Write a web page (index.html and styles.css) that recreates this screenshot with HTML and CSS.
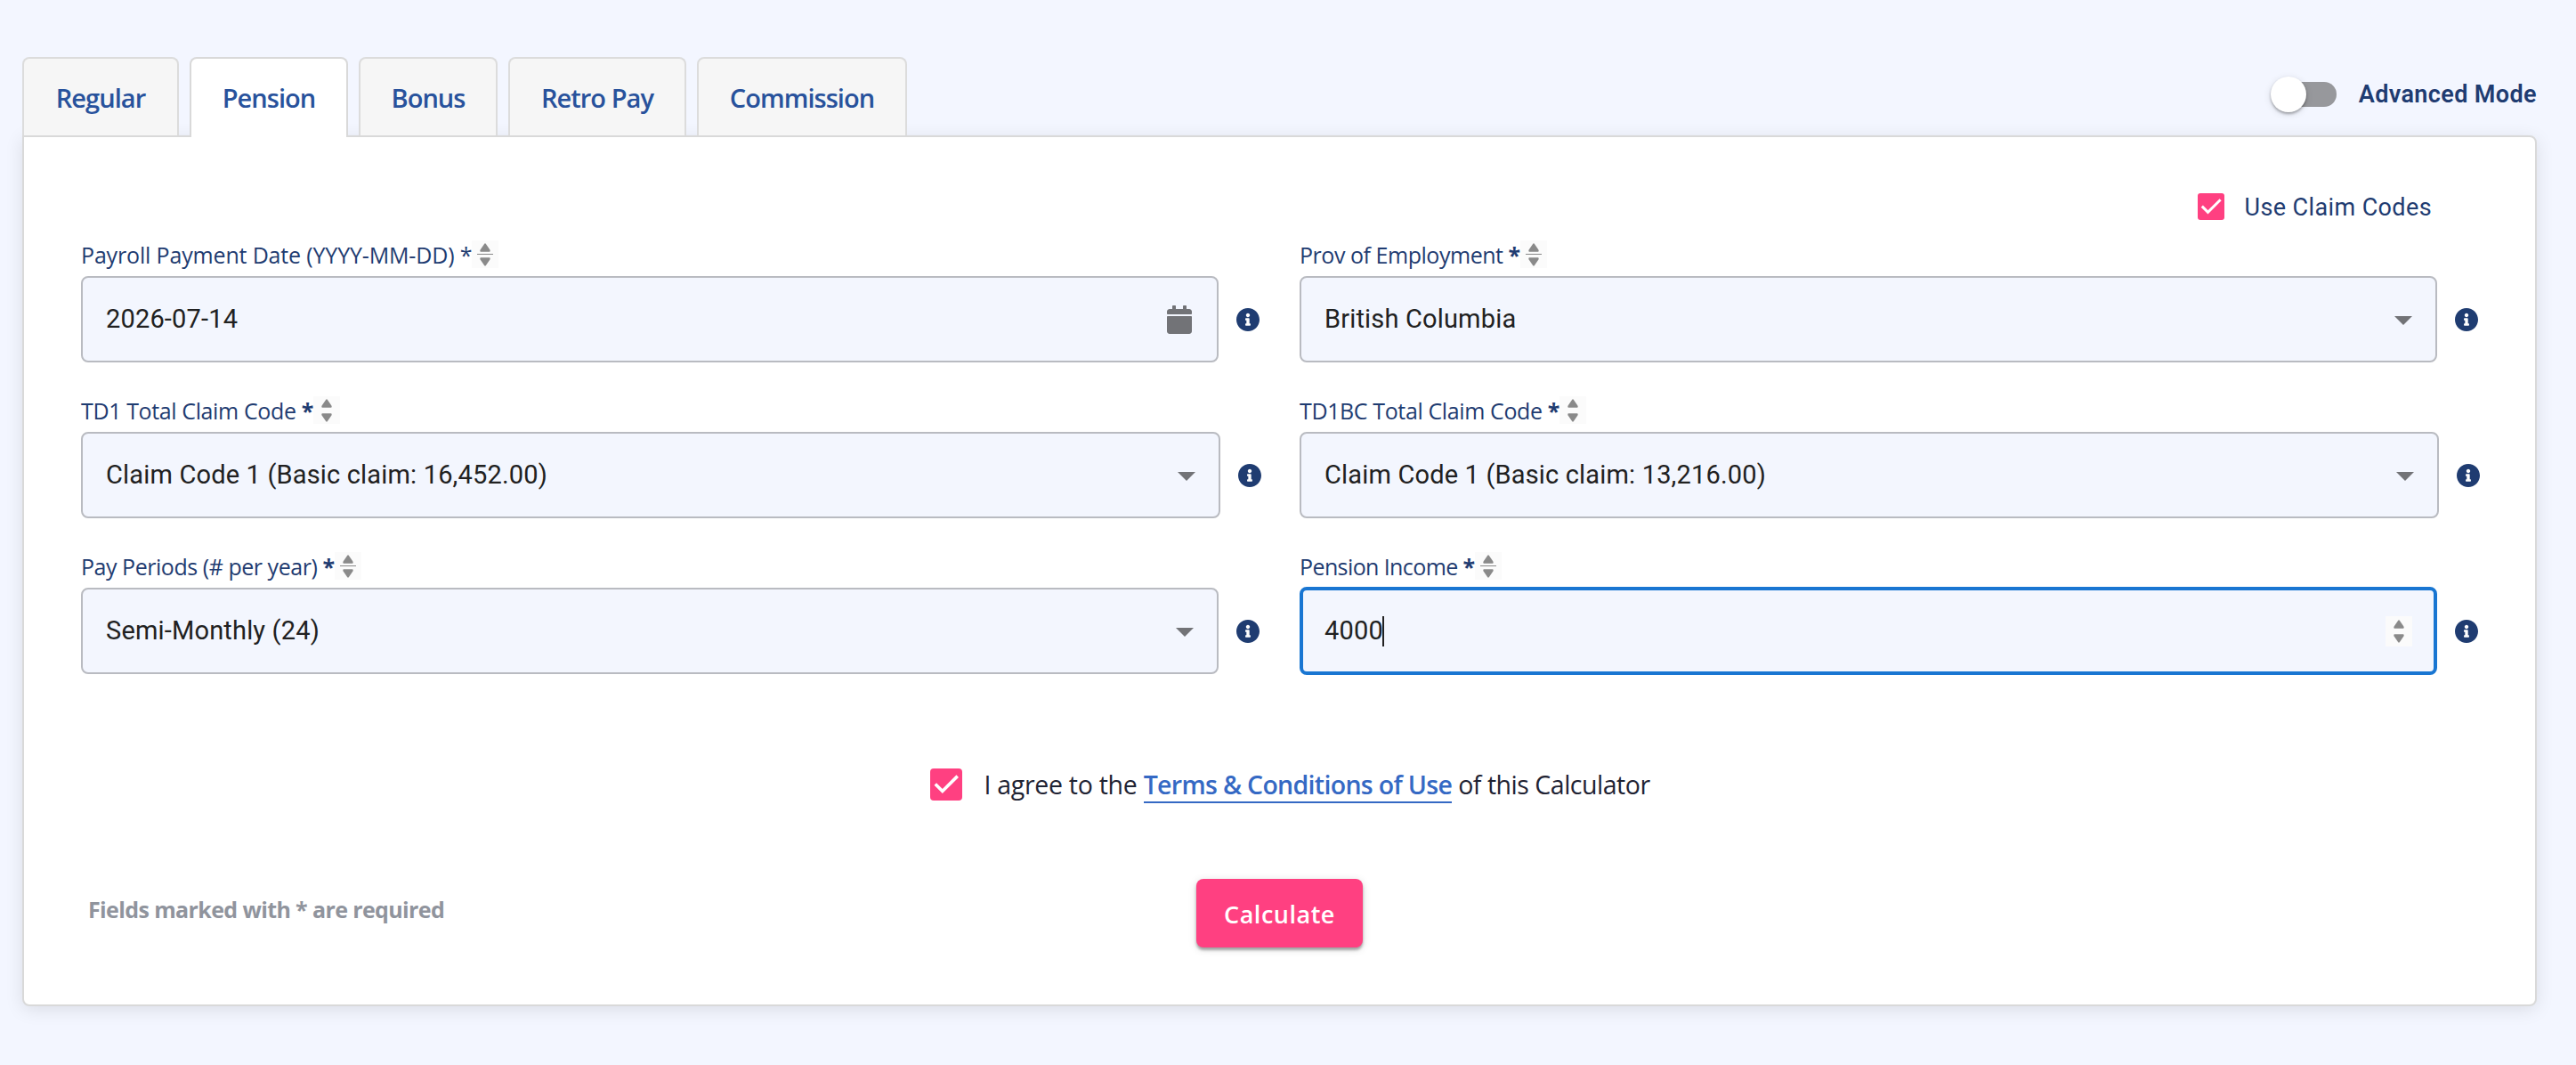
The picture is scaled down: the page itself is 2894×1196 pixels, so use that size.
FILE: index.html
```html
<!DOCTYPE html>
<html lang="en">
<head>
    <meta charset="UTF-8">
    <meta name="viewport" content="width=device-width, initial-scale=1.0">
    <title>Payroll Calculator</title>
    <link rel="stylesheet" href="styles.css">
</head>
<body>

<!-- Shared icons -->
<svg class="icon-defs" width="0" height="0">
    <symbol id="icon-info" viewBox="8 8 496 496">
        <path d="M256 8C119.043 8 8 119.083 8 256c0 136.997 111.043 248 248 248s248-111.003 248-248C504 119.083 392.957 8 256 8zm0 110c23.196 0 42 18.804 42 42s-18.804 42-42 42-42-18.804-42-42 18.804-42 42-42zm56 254c0 6.627-5.373 12-12 12h-88c-6.627 0-12-5.373-12-12v-24c0-6.627 5.373-12 12-12h12v-64h-12c-6.627 0-12-5.373-12-12v-24c0-6.627 5.373-12 12-12h64c6.627 0 12 5.373 12 12v100h12c6.627 0 12 5.373 12 12v24z"/>
    </symbol>
    <symbol id="icon-calendar" viewBox="0 0 448 512">
        <path d="M12 192h424c6.600 0 12 5.400 12 12v260c0 26.500-21.500 48-48 48H48c-26.500 0-48-21.500-48-48V204c0-6.600 5.400-12 12-12zm436-44v-36c0-26.500-21.500-48-48-48h-48V12c0-6.600-5.400-12-12-12h-40c-6.600 0-12 5.400-12 12v52H160V12c0-6.600-5.400-12-12-12h-40c-6.600 0-12 5.400-12 12v52H48C21.500 64 0 85.500 0 112v36c0 6.600 5.400 12 12 12h424c6.600 0 12-5.400 12-12z"/>
    </symbol>
    <symbol id="icon-arrow" viewBox="0 0 20 10">
        <path d="M0 0h20L10 10z"/>
    </symbol>
    <symbol id="icon-check" viewBox="0 0 30 30">
        <path d="M4.800 14.600l6.700 6.700L25.600 7.200" fill="none" stroke="#fff" stroke-width="3"/>
    </symbol>
    <symbol id="icon-spin" viewBox="0 0 12 27">
        <path d="M5.200 .700Q6-.300 6.800 .700L11.600 7.800Q12.400 10 11 10H1Q-.400 10 .400 7.800z"/>
        <path d="M5.200 26.300Q6 27.300 6.800 26.300L11.600 19.200Q12.400 17 11 17H1Q-.400 17 .400 19.200z"/>
    </symbol>
</svg>

<div class="calculator">
    <div class="top-bar">
        <div class="tabs">
            <div class="tab tab-regular">Regular</div>
            <div class="tab tab-pension active">Pension</div>
            <div class="tab tab-bonus">Bonus</div>
            <div class="tab tab-retro">Retro Pay</div>
            <div class="tab tab-commission">Commission</div>
        </div>
        <div class="mode">
            <div class="toggle"><div class="knob"></div></div>
            <span>Advanced Mode</span>
        </div>
    </div>

    <div class="card">
        <div class="claim-row">
            <svg class="checkbox"><use href="#icon-check"/></svg>
            <span>Use Claim Codes</span>
        </div>

        <div class="fields">
            <div class="field">
                <div class="label label-date"><span>Payroll Payment Date (YYYY-MM-DD) *</span><div class="stepper lined"><svg><use href="#icon-spin"/></svg></div></div>
                <div class="control">
                    <div class="input"><span>2026-07-14</span><svg class="calendar"><use href="#icon-calendar"/></svg></div>
                    <svg class="info"><use href="#icon-info"/></svg>
                </div>
            </div>
            <div class="field">
                <div class="label"><span>Prov of Employment <b>*</b></span><div class="stepper lined"><svg><use href="#icon-spin"/></svg></div></div>
                <div class="control">
                    <div class="input"><span>British Columbia</span><svg class="arrow"><use href="#icon-arrow"/></svg></div>
                    <svg class="info"><use href="#icon-info"/></svg>
                </div>
            </div>
            <div class="field">
                <div class="label label-claim"><span>TD1 Total Claim Code <b>*</b></span><div class="stepper"><svg><use href="#icon-spin"/></svg></div></div>
                <div class="control">
                    <div class="input wide"><span>Claim Code 1 (Basic claim: 16,452.00)</span><svg class="arrow"><use href="#icon-arrow"/></svg></div>
                    <svg class="info"><use href="#icon-info"/></svg>
                </div>
            </div>
            <div class="field">
                <div class="label label-claim"><span>TD1BC Total Claim Code <b>*</b></span><div class="stepper"><svg><use href="#icon-spin"/></svg></div></div>
                <div class="control">
                    <div class="input wide"><span>Claim Code 1 (Basic claim: 13,216.00)</span><svg class="arrow"><use href="#icon-arrow"/></svg></div>
                    <svg class="info"><use href="#icon-info"/></svg>
                </div>
            </div>
            <div class="field">
                <div class="label"><span>Pay Periods (# per year) <b>*</b></span><div class="stepper lined"><svg><use href="#icon-spin"/></svg></div></div>
                <div class="control">
                    <div class="input"><span>Semi-Monthly (24)</span><svg class="arrow"><use href="#icon-arrow"/></svg></div>
                    <svg class="info"><use href="#icon-info"/></svg>
                </div>
            </div>
            <div class="field">
                <div class="label label-income"><span>Pension Income <b>*</b></span><div class="stepper lined"><svg><use href="#icon-spin"/></svg></div></div>
                <div class="control">
                    <div class="input focused"><span>4000</span><div class="caret"></div><div class="stepper"><svg><use href="#icon-spin"/></svg></div></div>
                    <svg class="info"><use href="#icon-info"/></svg>
                </div>
            </div>
        </div>

        <div class="agree">
            <svg class="checkbox large"><use href="#icon-check"/></svg>
            <div><span class="agree-start">I agree to the </span><a class="terms">Terms &amp; Conditions of Use</a> of this Calculator</div>
        </div>

        <div class="footer">
            <div class="note">Fields marked with * are required</div>
            <button class="btn">Calculate</button>
        </div>
    </div>
</div>

</body>
</html>
```
FILE: styles.css
```css
* {
    box-sizing: border-box;
}

body {
    font-family: "Open Sans", "Noto Sans", sans-serif;
    margin: 0;
    background-color: #f3f6ff;
    color: #1f3c71;
}

svg {
    display: block;
    flex: none;
}

.icon-defs {
    position: absolute;
}

.calculator {
    padding: 64px 44px 66px 25px;
}

.top-bar {
    display: flex;
    justify-content: space-between;
    height: 88px;
}

.tabs {
    display: flex;
    gap: 12px;
}

.tab {
    display: flex;
    align-items: center;
    justify-content: center;
    height: 88px;
    border: 2px solid #dcdcdc;
    border-bottom: none;
    border-radius: 8px 8px 0 0;
    background-color: #f6f6f6;
    color: #28529c;
    font-size: 29px;
    font-weight: 600;
    letter-spacing: -0.95px;
}

.tab.active {
    position: relative;
    z-index: 1;
    height: 90px;
    padding-bottom: 2px;
    background-color: #fff;
    border-color: #d9d9d9;
}

.tab-regular {
    width: 176px;
}

.tab-pension {
    width: 178px;
}

.tab-bonus {
    width: 156px;
}

.tab-retro {
    width: 200px;
}

.tab-commission {
    width: 236px;
}

.mode {
    display: flex;
    align-items: center;
    gap: 25px;
    height: 84px;
    font-family: Roboto, sans-serif;
    font-size: 27px;
    font-weight: 600;
    letter-spacing: 0.38px;
}

.toggle {
    display: flex;
    align-items: center;
    width: 72px;
    height: 28px;
    border-radius: 14px;
    background-color: #97989c;
}

.knob {
    flex: none;
    width: 40px;
    height: 40px;
    margin-left: -2px;
    border-radius: 50%;
    background-color: #fff;
    box-shadow: 0 2px 3px rgba(0, 0, 0, 0.3), 0 2px 8px rgba(0, 0, 0, 0.12);
}

.card {
    padding: 63px 62px 64px 64px;
    border: 2px solid #d9d9d9;
    border-radius: 0 8px 8px 8px;
    background-color: #fff;
    box-shadow: 0 4px 20px rgba(0, 0, 0, 0.1);
}

.claim-row {
    display: flex;
    align-items: center;
    justify-content: flex-end;
    gap: 23px;
    height: 30px;
    padding-right: 54px;
    margin-bottom: 23px;
    font-family: Roboto, sans-serif;
    font-size: 27px;
    letter-spacing: 0.38px;
}

.claim-row span {
    padding-top: 2px;
}

.checkbox {
    width: 30px;
    height: 30px;
    border-radius: 3px;
    background-color: #ff4081;
}

.checkbox.large {
    width: 36px;
    height: 36px;
    border-radius: 4px;
}

/* Form fields */
.fields {
    display: grid;
    grid-template-columns: 1326px 1326px;
    column-gap: 43px;
    row-gap: 38px;
}

.label {
    display: flex;
    height: 31px;
    margin-bottom: 9px;
    font-size: 25px;
    line-height: 33px;
    letter-spacing: -0.46px;
    white-space: nowrap;
}

.label-date {
    letter-spacing: -0.16px;
}

.label-claim {
    letter-spacing: -0.38px;
}

.label-income {
    letter-spacing: -0.6px;
}

.stepper {
    display: flex;
    align-items: center;
    justify-content: center;
    width: 30px;
    height: 31px;
    background-color: #fbfbfb;
}

.stepper svg {
    width: 12px;
    height: 26px;
    fill: #8a8a8a;
}

.stepper.lined {
    background-image: linear-gradient(#8a8a8a, #8a8a8a);
    background-size: 18px 1px;
    background-position: center 15px;
    background-repeat: no-repeat;
}

.control {
    display: flex;
    align-items: center;
    gap: 20px;
    height: 97px;
}

.input {
    display: flex;
    align-items: center;
    justify-content: space-between;
    width: 1278px;
    height: 97px;
    padding: 0 26px;
    border: 2px solid #b9bbc1;
    border-radius: 8px;
    background-color: #f3f6fe;
    color: #212121;
    font-family: Roboto, sans-serif;
    font-size: 29px;
    letter-spacing: 0.17px;
}

.input span {
    padding-bottom: 1px;
}

.input.wide {
    width: 1280px;
}

.input.focused {
    height: 99px;
    padding: 0 24px;
    border: 4px solid #1976d2;
}

.input .stepper {
    height: 34px;
    margin-left: auto;
}

.caret {
    width: 2px;
    height: 34px;
    margin-left: -1px;
    background-color: #212121;
}

.arrow {
    width: 20px;
    height: 10px;
    margin-top: 2px;
    fill: #727377;
}

.calendar {
    width: 28px;
    height: 32px;
    margin-right: 2px;
    fill: #727377;
}

.info {
    width: 26px;
    height: 26px;
    fill: #1f3c71;
}

.agree {
    display: flex;
    align-items: center;
    justify-content: center;
    gap: 24px;
    height: 36px;
    margin-top: 106px;
    padding-left: 22px;
    color: #1f2333;
    font-size: 28.5px;
    letter-spacing: -0.48px;
}

.agree-start {
    letter-spacing: -0.28px;
}

.terms {
    border-bottom: 2px solid #3569c4;
    color: #3569c4;
    font-weight: 600;
    letter-spacing: -0.68px;
}

.footer {
    display: grid;
    grid-template-columns: 1fr 187px 1fr;
    align-items: center;
    margin-top: 88px;
    padding-right: 2px;
}

.note {
    padding: 0 0 9px 8px;
    color: #90949d;
    font-size: 25px;
    font-weight: 700;
    letter-spacing: -0.62px;
}

.btn {
    height: 77px;
    padding: 2px 0 0;
    border: none;
    border-radius: 8px;
    background-color: #ff4081;
    color: #fff;
    cursor: pointer;
    font-family: "Open Sans", "Noto Sans", sans-serif;
    font-size: 27px;
    font-weight: 600;
    letter-spacing: 0.5px;
    box-shadow: 0 3px 3px rgba(0, 0, 0, 0.3), 0 2px 10px rgba(0, 0, 0, 0.15);
}
```
